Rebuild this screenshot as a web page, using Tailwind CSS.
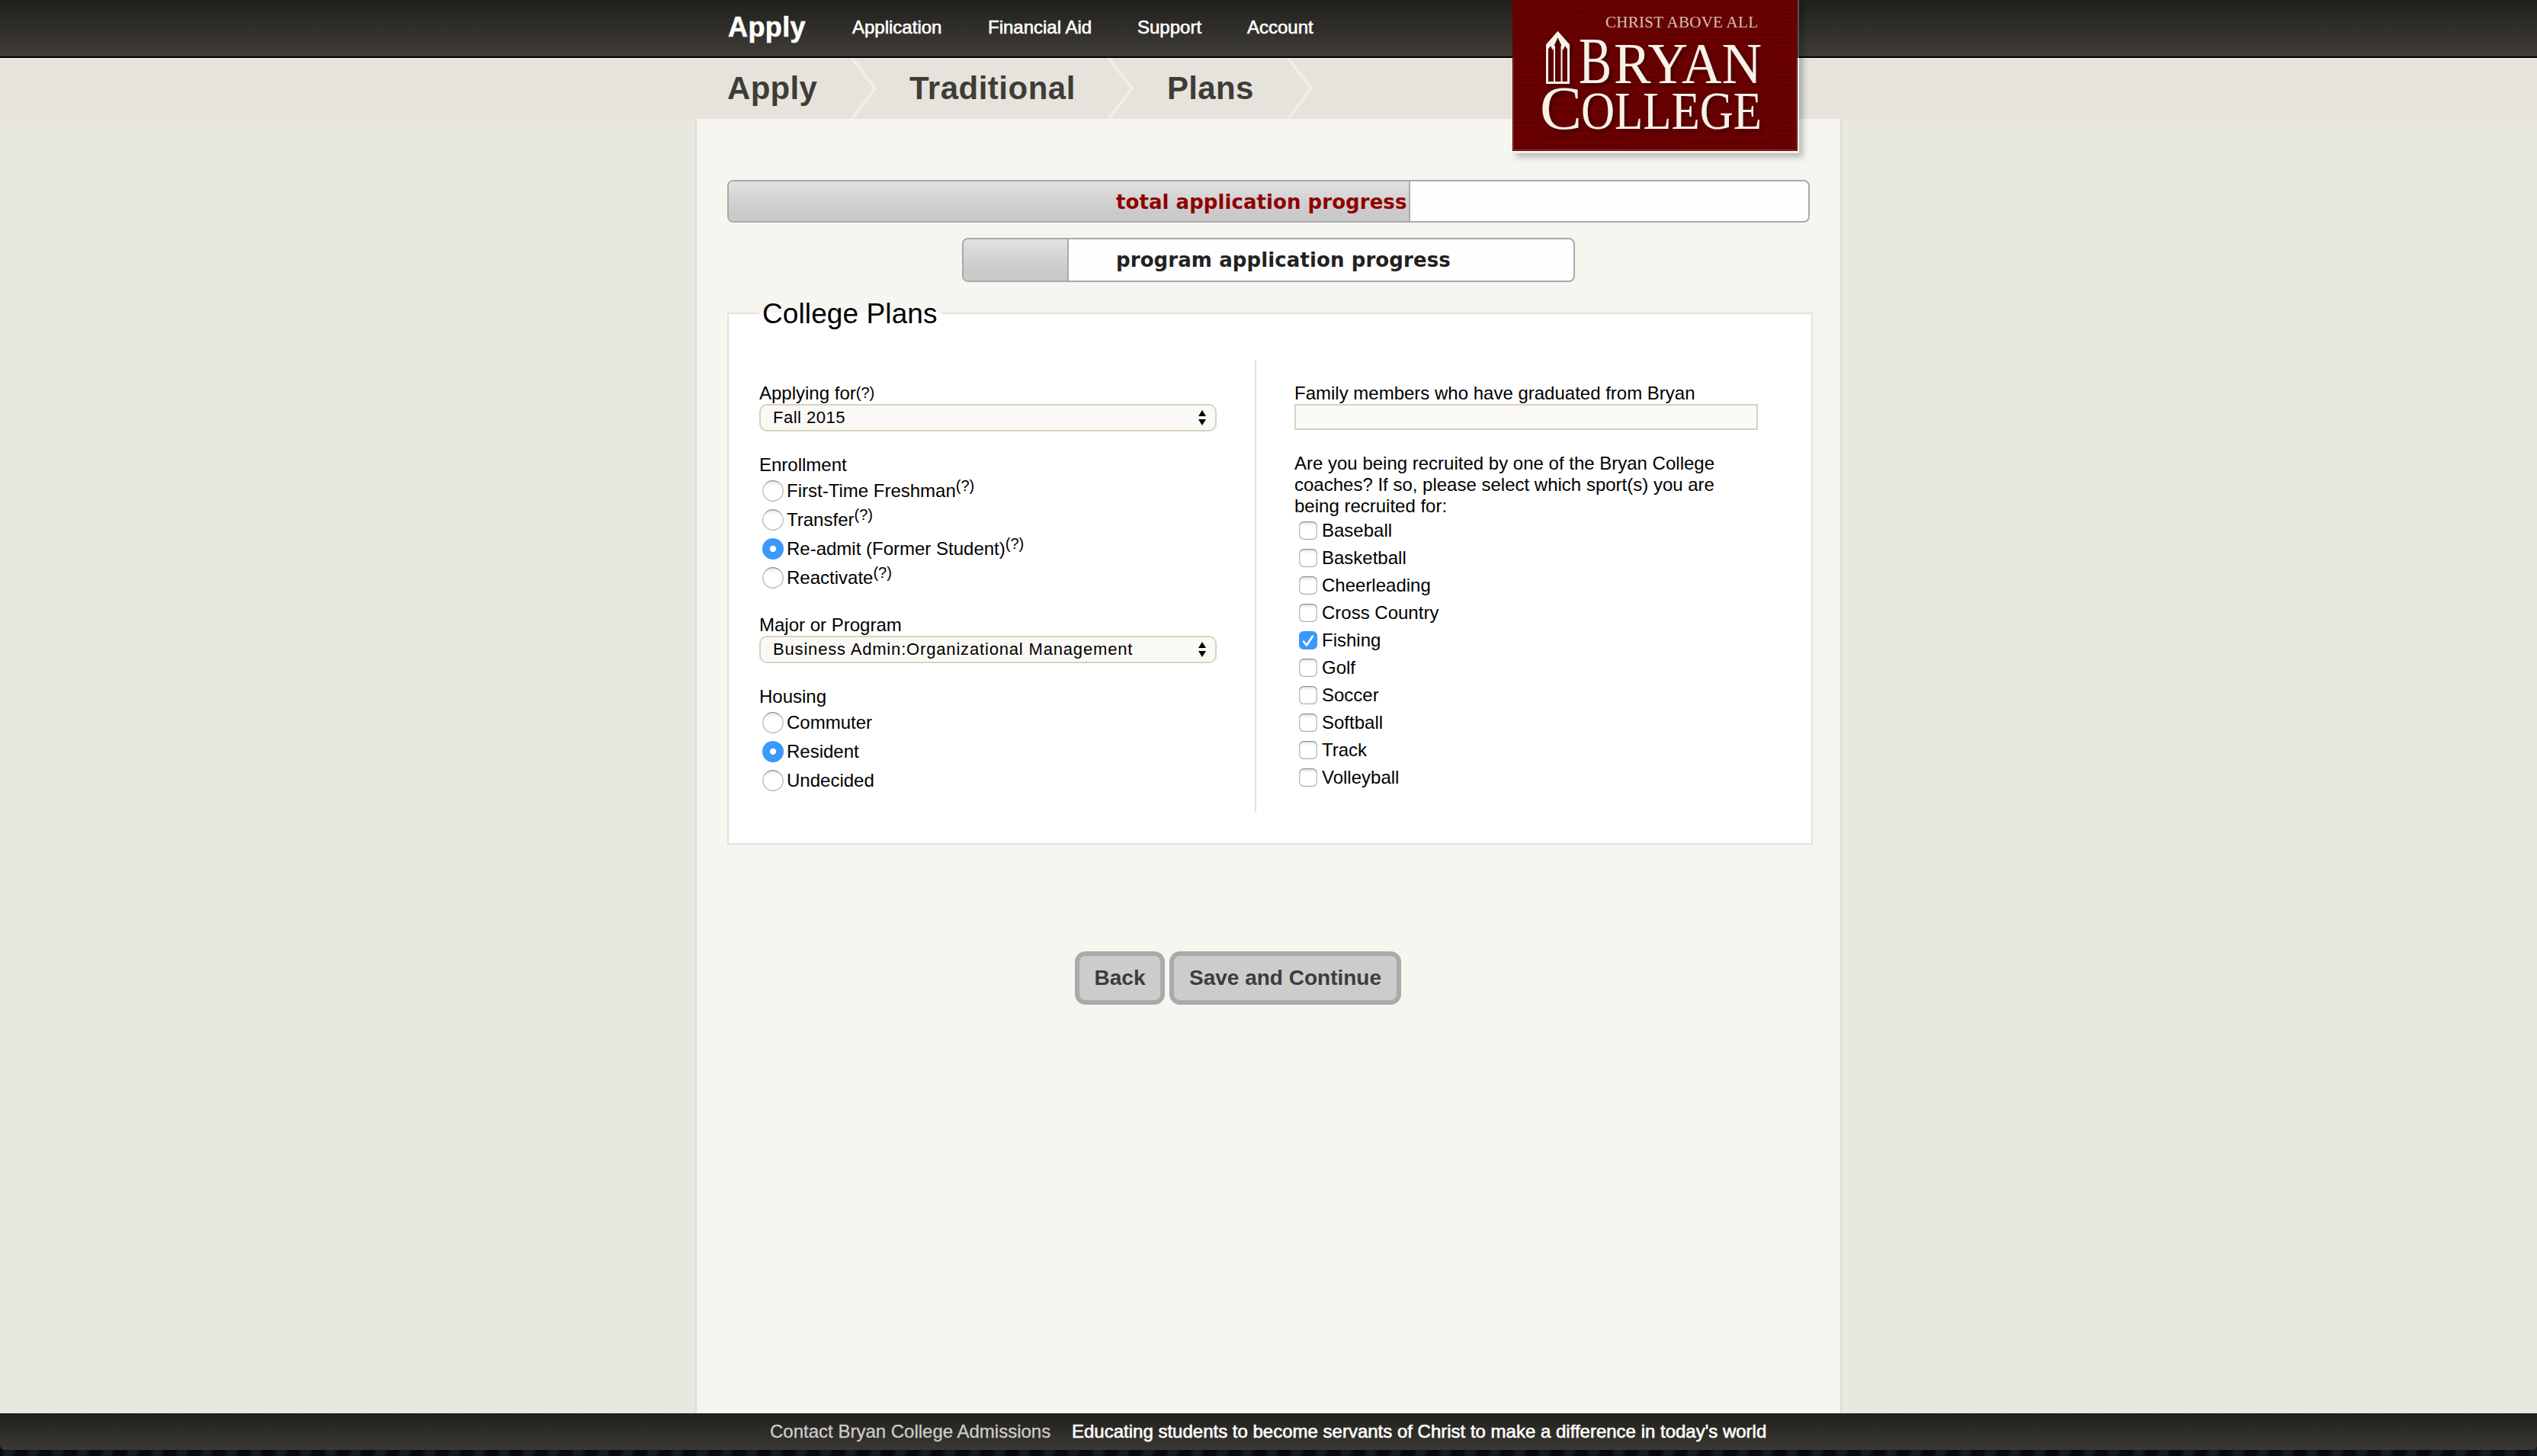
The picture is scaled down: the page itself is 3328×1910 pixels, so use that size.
<!DOCTYPE html>
<html lang="en">
<head>
<meta charset="utf-8">
<title>Bryan College - Plans</title>
<script src="https://cdn.jsdelivr.net/npm/@tailwindcss/browser@4"></script>
</head>
<body class="w-[3328px] h-[1910px] overflow-hidden flex flex-col bg-[#0b0c10] bg-[repeating-linear-gradient(100deg,#08090c_0_12px,#161a24_18px_26px,#08090c_32px)] font-['Liberation_Sans',Arial,sans-serif] text-2xl leading-7 text-black">

<!-- Form control shapes -->
<svg class="absolute size-0">
  <defs>
    <linearGradient id="well" x2="0" y2="1"><stop offset="0" stop-color="#e6e6e6"/><stop offset=".25" stop-color="#fff"/></linearGradient>
    <linearGradient id="edge" x2="0" y2="1"><stop offset="0" stop-color="#8e8e8e"/><stop offset=".3" stop-color="#bdbdbd"/><stop offset="1" stop-color="#b0b0b0"/></linearGradient>
  </defs>
  <symbol id="radio" viewBox="0 0 28 28"><circle cx="14" cy="14" r="13.300" fill="url(#well)" stroke="url(#edge)" stroke-width="1.300"/></symbol>
  <symbol id="radio-on" viewBox="0 0 28 28"><circle cx="14" cy="14" r="14" fill="#3b99fc"/><circle cx="14" cy="14.800" r="4.300" fill="#2a7fdc"/><circle cx="14" cy="14" r="4.200" fill="#fff"/></symbol>
  <symbol id="check" viewBox="0 0 24 24"><rect x=".7" y=".7" width="22.600" height="22.600" rx="5.500" fill="url(#well)" stroke="url(#edge)" stroke-width="1.300"/></symbol>
  <symbol id="check-on" viewBox="0 0 24 24"><rect width="24" height="24" rx="6" fill="#3b99fc"/><path d="M6 13.500l4 5L18 6.500" fill="none" stroke="#fff" stroke-width="2.600" stroke-linecap="round" stroke-linejoin="round"/></symbol>
  <symbol id="stepper" viewBox="0 0 10 20"><path d="M0 8 5 0l5 8zM0 12h10l-5 8z"/></symbol>
</svg>

<header class="relative shrink-0">
  <nav class="h-[76px] bg-linear-to-b from-[#21201d] to-[#403d37] border-b-2 border-black text-white">
    <div class="ml-[955px] flex [-webkit-text-stroke:0.6px]">
      <a class="w-[163px] text-4xl leading-[71px] font-bold tracking-[0.4px]">Apply</a>
      <a class="w-[178px] leading-[71px]">Application</a>
      <a class="w-[196px] leading-[71px]">Financial Aid</a>
      <a class="w-[144px] leading-[71px]">Support</a>
      <a class="leading-[71px]">Account</a>
    </div>
  </nav>
  <div class="h-20 bg-[#e5e3dc] pl-[954px] flex text-[42px] leading-[79px] font-bold text-[#3f3c37]">
    <span class="w-[160px] tracking-[0.3px]">Apply</span>
    <svg class="w-[79px] h-20" viewBox="0 0 79 80" fill="none" stroke="#f1efe2" stroke-width="4"><path d="M2 -2 34 40 2 82"/></svg>
    <span class="w-[258px] tracking-[0.5px]">Traditional</span>
    <svg class="w-[80px] h-20" viewBox="0 0 80 80" fill="none" stroke="#f1efe2" stroke-width="4"><path d="M2 -2 34 40 2 82"/></svg>
    <span class="w-[155px] tracking-[0.3px]">Plans</span>
    <svg class="w-[78px] h-20" viewBox="0 0 78 80" fill="none" stroke="#f1efe2" stroke-width="4"><path d="M2 -2 34 40 2 82"/></svg>
  </div>
  <!-- College logo, hanging over both bars -->
  <svg class="absolute left-[1984px] top-0 w-[376px] h-[201px] shadow-[5px_5px_8px_rgba(0,0,0,0.25)]" viewBox="0 0 376 201" font-family="Liberation Serif, serif" fill="#f6f2e8">
    <defs>
      <pattern id="grain" width="374" height="11" patternUnits="userSpaceOnUse"><rect width="374" height="11" fill="#6a0000"/><path d="M0 2q90 2 187 0t187 0M0 7q90-2 187 0t187 0" stroke="#5d0000" stroke-width="1.4" fill="none"/></pattern>
      <filter id="sh" x="-10%" y="-10%" width="120%" height="120%"><feDropShadow dx="3" dy="3" stdDeviation="2" flood-color="#2a0000" flood-opacity=".6"/></filter>
    </defs>
    <rect y="76" width="376" height="125" fill="#f3f2ee"/>
    <rect width="376" height="76" fill="#55534e"/>
    <rect width="374" height="198" fill="url(#grain)"/>
    <path d="M1.500 76V196.500H372.500V76" fill="none" stroke="#8c2a2a"/>
    <text x="122" y="36" font-size="21" textLength="200" lengthAdjust="spacing" fill="#d8c0b4">CHRIST ABOVE ALL</text>
    <g filter="url(#sh)">
      <path fill="none" stroke="#f6f2e8" stroke-width="3" d="M45.500 108.500V59L59.500 43 73.500 59V108.500Z"/>
      <path fill="#f6f2e8" d="M45 60 59.500 42 74 60 73 66 69 60 66 66 64.500 60 59.500 49 54.500 60 53 66 50 60 46 66Z"/>
      <path fill="none" stroke="#f6f2e8" stroke-width="2" d="M55 108V60M64.500 108V60"/>
      <text x="87" y="109" font-size="87" textLength="43" lengthAdjust="spacingAndGlyphs">B</text>
      <text x="133" y="109" font-size="77" textLength="194" lengthAdjust="spacingAndGlyphs">RYAN</text>
      <text x="36" y="169" font-size="80" textLength="55" lengthAdjust="spacingAndGlyphs">C</text>
      <text x="90" y="169" font-size="70" textLength="237" lengthAdjust="spacingAndGlyphs">OLLEGE</text>
    </g>
  </svg>
</header>

<main class="h-[1698px] shrink-0 bg-[#e8e8e0]">
  <div class="ml-[912px] w-[1504px] h-full border-x-2 border-[#dcdbd2] bg-[#f6f5f0] pt-20">
    <div class="ml-10 w-[1420px] h-14 border-2 border-[#a9a9a9] rounded-lg overflow-hidden bg-[#fefefe] grid">
      <div class="col-start-1 row-start-1 w-[894px] bg-linear-to-b from-[#e1e1e1] to-[#cacaca] to-75% border-r-2 border-[#a9a9a9]"></div>
      <span class="col-start-1 row-start-1 pl-[508px] font-['DejaVu_Sans',Verdana,sans-serif] font-bold text-[26px] leading-[54px] tracking-[0.06px] text-[#8f0000]">total application progress</span>
    </div>
    <div class="mt-5 ml-[348px] w-[804px] h-[58px] border-2 border-[#a9a9a9] rounded-lg overflow-hidden bg-[#fefefe] grid">
      <div class="col-start-1 row-start-1 w-[138px] bg-linear-to-b from-[#e1e1e1] to-[#cacaca] to-75% border-r-2 border-[#a9a9a9]"></div>
      <span class="col-start-1 row-start-1 pl-[200px] font-['DejaVu_Sans',Verdana,sans-serif] font-bold text-[26px] leading-[54px] tracking-[0.1px] text-[#222]">program application progress</span>
    </div>

    <section class="mt-10 ml-10 w-[1424px] h-[698px] border-2 border-[#e3e3da] bg-white">
      <h2 class="-mt-[22px] ml-10 w-[239px] h-10 pl-1 text-[37px] leading-[43px] tracking-[0.1px] whitespace-nowrap bg-linear-to-b from-[#f6f5f0] from-50% to-white to-50%">College Plans</h2>
      <div class="mt-[42px] h-[594px] flex">
        <div class="w-[692px] border-r-2 border-[#e5e4db] pt-[30px] pl-10">
          <label class="flex h-7">Applying for<span class="text-xl leading-[27px]">(?)</span></label>
          <div class="w-[600px] h-9 border-2 border-[#d8d3bd] rounded-[10px] bg-[#faf9f5] flex items-center justify-between pl-4 pr-3 text-[22px] tracking-[0.5px]">Fall 2015<svg class="w-[10px] h-5"><use href="#stepper"/></svg></div>
          <div class="mt-[30px] mb-px">Enrollment</div>
          <div class="h-[38px] flex items-center pl-1"><svg class="size-7 mr-1"><use href="#radio"/></svg>First-Time Freshman<sup class="text-xl leading-7 -mt-[14px] top-0">(?)</sup></div>
          <div class="h-[38px] flex items-center pl-1"><svg class="size-7 mr-1"><use href="#radio"/></svg>Transfer<sup class="text-xl leading-7 -mt-[14px] top-0">(?)</sup></div>
          <div class="h-[38px] flex items-center pl-1"><svg class="size-7 mr-1"><use href="#radio-on"/></svg>Re-admit (Former Student)<sup class="text-xl leading-7 -mt-[14px] top-0">(?)</sup></div>
          <div class="h-[38px] flex items-center pl-1"><svg class="size-7 mr-1"><use href="#radio"/></svg>Reactivate<sup class="text-xl leading-7 -mt-[14px] top-0">(?)</sup></div>
          <div class="mt-[29px]">Major or Program</div>
          <div class="w-[600px] h-9 border-2 border-[#d8d3bd] rounded-[10px] bg-[#faf9f5] flex items-center justify-between pl-4 pr-3 text-[22px] tracking-[0.83px]">Business Admin:Organizational Management<svg class="w-[10px] h-5"><use href="#stepper"/></svg></div>
          <div class="mt-[30px] mb-px">Housing</div>
          <div class="h-[38px] flex items-center pl-1"><svg class="size-7 mr-1"><use href="#radio"/></svg>Commuter</div>
          <div class="h-[38px] flex items-center pl-1"><svg class="size-7 mr-1"><use href="#radio-on"/></svg>Resident</div>
          <div class="h-[38px] flex items-center pl-1"><svg class="size-7 mr-1"><use href="#radio"/></svg>Undecided</div>
        </div>
        <div class="pt-[30px] pl-[50px]">
          <div>Family members who have graduated from Bryan</div>
          <div class="w-[608px] h-[34px] border-2 border-[#d8d3bd] bg-[#faf9f5]"></div>
          <p class="mt-[30px]">Are you being recruited by one of the Bryan College<br>coaches? If so, please select which sport(s) you are<br>being recruited for:</p>
          <div class="h-9 flex items-center pl-1.5"><svg class="size-6 mr-1.5"><use href="#check"/></svg>Baseball</div>
          <div class="h-9 flex items-center pl-1.5"><svg class="size-6 mr-1.5"><use href="#check"/></svg>Basketball</div>
          <div class="h-9 flex items-center pl-1.5"><svg class="size-6 mr-1.5"><use href="#check"/></svg>Cheerleading</div>
          <div class="h-9 flex items-center pl-1.5"><svg class="size-6 mr-1.5"><use href="#check"/></svg>Cross Country</div>
          <div class="h-9 flex items-center pl-1.5"><svg class="size-6 mr-1.5"><use href="#check-on"/></svg>Fishing</div>
          <div class="h-9 flex items-center pl-1.5"><svg class="size-6 mr-1.5"><use href="#check"/></svg>Golf</div>
          <div class="h-9 flex items-center pl-1.5"><svg class="size-6 mr-1.5"><use href="#check"/></svg>Soccer</div>
          <div class="h-9 flex items-center pl-1.5"><svg class="size-6 mr-1.5"><use href="#check"/></svg>Softball</div>
          <div class="h-9 flex items-center pl-1.5"><svg class="size-6 mr-1.5"><use href="#check"/></svg>Track</div>
          <div class="h-9 flex items-center pl-1.5"><svg class="size-6 mr-1.5"><use href="#check"/></svg>Volleyball</div>
        </div>
      </div>
    </section>

    <div class="mt-[140px] ml-[496px] flex gap-1.5 font-bold text-[28px] text-[#3c3c3c]">
      <button class="w-[118px] h-[70px] border-6 border-[#aaa] bg-[#ccc] rounded-[14px]">Back</button>
      <button class="w-[304px] h-[70px] border-6 border-[#aaa] bg-[#ccc] rounded-[14px]">Save and Continue</button>
    </div>
  </div>
</main>

<footer class="h-12 shrink-0 rounded-b-md bg-linear-to-b from-[#21201d] to-[#3b3832] flex pl-[1010px] leading-[47px]">
  <span class="w-[396px] text-[#ccc] [-webkit-text-stroke:0.3px]">Contact Bryan College Admissions</span>
  <span class="text-white [-webkit-text-stroke:0.6px]">Educating students to become servants of Christ to make a difference in today's world</span>
</footer>

</body>
</html>
